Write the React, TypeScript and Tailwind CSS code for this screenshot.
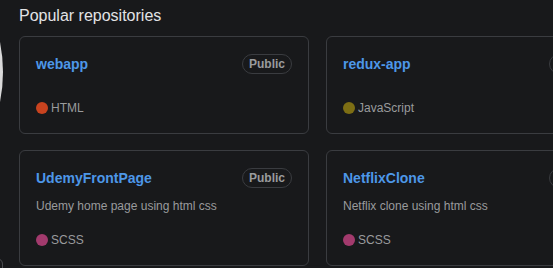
import React from 'react';

type Repo = { name: string; desc?: string; lang: string; color: string };

const repos: Repo[] = [
  { name: 'webapp', lang: 'HTML', color: 'bg-[#c8431f]' },
  { name: 'redux-app', lang: 'JavaScript', color: 'bg-[#7d6e14]' },
  { name: 'UdemyFrontPage', desc: 'Udemy home page using html css', lang: 'SCSS', color: 'bg-[#a23a6d]' },
  { name: 'NetflixClone', desc: 'Netflix clone using html css', lang: 'SCSS', color: 'bg-[#a23a6d]' },
];

const RepoCard = ({ repo }: { repo: Repo }) => (
  <div className="w-[290px] rounded-md border border-[#3a3c40] px-4 py-4 flex flex-col">
    <div className="flex items-center justify-between h-[22px]">
      <span className="text-sm font-semibold text-[#4d97e8]">{repo.name}</span>
      <span className="h-5 px-[6px] rounded-full border border-[#3a3c40] text-xs font-semibold leading-[18px] text-[#9a9b9d]">
        Public
      </span>
    </div>
    <p className="mt-2 text-xs leading-[18px] text-[#9a9b9d]">{repo.desc}</p>
    <p className="mt-4 flex items-center text-xs leading-[18px] text-[#9a9b9d]">
      <span className={`w-3 h-3 rounded-full mr-[3px] ${repo.color}`}></span>
      {repo.lang}
    </p>
  </div>
);

export default function App() {
  return (
    <div
      className="relative h-[268px] w-full overflow-hidden bg-[#18191b] pl-[19px] pt-[4px]"
      style={{ fontFamily: '"Liberation Sans", Arial, sans-serif' }}
    >
      {/* edge of the profile avatar */}
      <div className="absolute -left-[299px] -top-[79px] w-[302px] h-[302px] rounded-full bg-[#d9d9d9]"></div>
      <div className="absolute -left-[100px] top-[258px] w-[103px] h-[40px] rounded-md border border-[#4a4b4e]"></div>

      <h2 className="text-base leading-6 text-[#e2e3e5] mb-2">Popular repositories</h2>
      <div className="grid grid-cols-[290px_290px] gap-x-[17px] gap-y-4">
        {repos.map(r => (
          <RepoCard key={r.name} repo={r} />
        ))}
      </div>
    </div>
  );
}
